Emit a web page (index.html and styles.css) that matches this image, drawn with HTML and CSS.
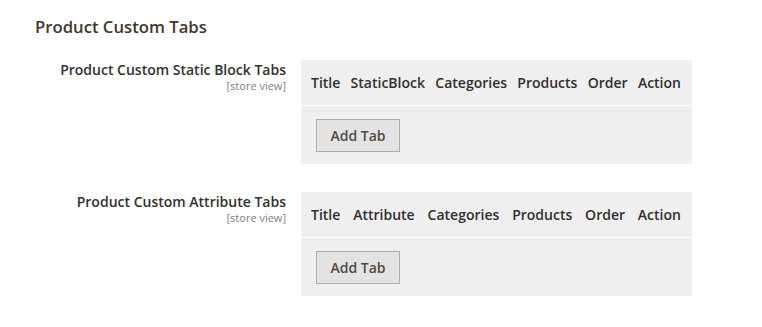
FILE: index.html
```html
<!DOCTYPE html>
<html lang="en">
<head>
    <meta charset="UTF-8">
    <meta name="viewport" content="width=device-width, initial-scale=1.0">
    <title>Product Custom Tabs</title>
    <link rel="stylesheet" href="styles.css">
</head>
<body>
    <!-- tail of the previous field, scrolled out of view -->
    <div class="prev-field">
        <span class="scope">[store view]</span>
    </div>

    <h2 class="section-title">Product Custom Tabs</h2>

    <!-- Static block tabs -->
    <div class="field">
        <div class="field-label">
            <span class="label-text">Product Custom Static Block Tabs</span>
            <span class="scope">[store view]</span>
        </div>
        <div class="control-table">
            <div class="table-head">
                <span>Title</span>
                <span>StaticBlock</span>
                <span>Categories</span>
                <span>Products</span>
                <span>Order</span>
                <span>Action</span>
            </div>
            <div class="table-foot">
                <button class="btn-add">Add Tab</button>
            </div>
        </div>
    </div>

    <!-- Attribute tabs -->
    <div class="field">
        <div class="field-label">
            <span class="label-text">Product Custom Attribute Tabs</span>
            <span class="scope">[store view]</span>
        </div>
        <div class="control-table">
            <div class="table-head">
                <span>Title</span>
                <span>Attribute</span>
                <span>Categories</span>
                <span>Products</span>
                <span>Order</span>
                <span>Action</span>
            </div>
            <div class="table-foot">
                <button class="btn-add">Add Tab</button>
            </div>
        </div>
    </div>
</body>
</html>
```

FILE: styles.css
```css
body {
    margin: 0;
    font-family: "Open Sans", "Liberation Sans", Arial, sans-serif;
    background-color: #fff;
    color: #303030;
}
.prev-field {
    width: 286px;
    margin-top: -14px;
    text-align: right;
    height: 15px;
}
.scope {
    display: block;
    font-size: 11px;
    line-height: 15px;
    color: #808080;
}
.section-title {
    margin: 14px 0 22px 35px;
    font-size: 16.7px;
    font-weight: 600;
    line-height: 23px;
    color: #41362f;
}
.field {
    display: flex;
    gap: 15px;
    margin-bottom: 28px;
}
.field-label {
    width: 286px;
    text-align: right;
}
.label-text {
    display: block;
    font-size: 14px;
    font-weight: 600;
    line-height: 19px;
    margin-bottom: -1px;
}
.control-table {
    width: 391px;
    background-color: #efefef;
}
.table-head {
    display: flex;
    justify-content: space-between;
    padding: 13px 11px 13px 10px;
    font-size: 14px;
    font-weight: 600;
    line-height: 19px;
    border-bottom: 1px solid #fff;
}
.table-foot {
    padding: 13px 15px 12px;
}
.btn-add {
    font-family: inherit;
    font-size: 14px;
    font-weight: 600;
    line-height: 19px;
    padding: 6px 13.5px;
    color: #514943;
    background-color: #e3e3e3;
    border: 1px solid #adadad;
    border-radius: 0;
    cursor: pointer;
}
.btn-add:hover {
    background-color: #dbdbdb;
}
```
